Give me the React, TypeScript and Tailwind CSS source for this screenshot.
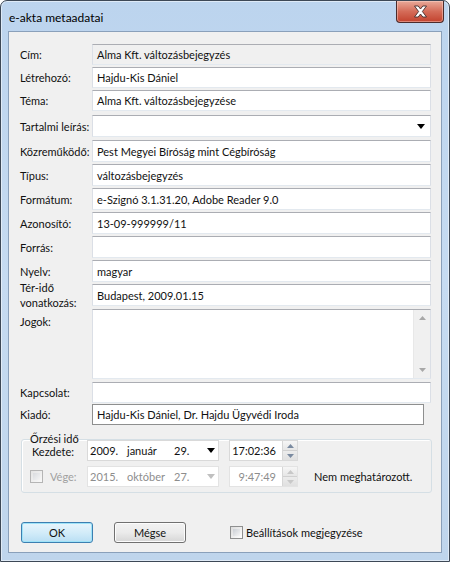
import React from 'react';

const font = { fontFamily: 'Lato, "Noto Sans", "Liberation Sans", sans-serif' };

function TextBox({ value = '', readOnly = false, className = '' }: { value?: string; readOnly?: boolean; className?: string }) {
  return (
    <div
      className={`flex items-center flex-1 h-full border border-[#dbdfe6] border-t-[#abadb3] border-b-[#e3e9ef] px-[4px] text-[11px] leading-none text-[#111] whitespace-nowrap overflow-hidden ${
        readOnly ? 'bg-[#f0f0f0]' : 'bg-white'
      } ${className}`}
    >
      {value}
    </div>
  );
}

function Row({ label, value, className, readOnly }: { label: string; value?: string; className: string; readOnly?: boolean }) {
  return (
    <div className={`flex items-center ${className}`}>
      <div className="w-[72px] shrink-0 text-[11px] leading-none text-[#111] whitespace-nowrap">{label}</div>
      <TextBox value={value} readOnly={readOnly} />
    </div>
  );
}

function SpinArrows({ disabled = false }: { disabled?: boolean }) {
  const c = disabled ? '#c8c8c8' : '#7a8aa0';
  return (
    <div className="flex flex-col w-[15px] h-full border-l border-[#d6d6d6]">
      <div className="flex-1 flex items-center justify-center bg-gradient-to-b from-[#f6f6f6] to-[#e6e6e6] border-b border-[#d0d0d0]">
        <svg width="7" height="4" viewBox="0 0 7 4">
          <path d="M0 4 L3.5 0 L7 4 Z" fill={c} />
        </svg>
      </div>
      <div className="flex-1 flex items-center justify-center bg-gradient-to-b from-[#ececec] to-[#e0e0e0]">
        <svg width="7" height="4" viewBox="0 0 7 4">
          <path d="M0 0 L3.5 4 L7 0 Z" fill={c} />
        </svg>
      </div>
    </div>
  );
}

function DatePicker({ y, m, d, disabled = false }: { y: string; m: string; d: string; disabled?: boolean }) {
  return (
    <div
      className={`flex items-center w-[132px] h-[21px] border bg-white text-[11px] leading-none whitespace-nowrap ${
        disabled ? 'border-[#e3e3e3] text-[#8d8d8d]' : 'border-[#d9d9d9] text-[#111]'
      }`}
    >
      <span className="w-[39px] pl-[2px]">{y}</span>
      <span className="w-[47px]">{m}</span>
      <span className="w-[33px]">{d}</span>
      <svg width="8" height="5" viewBox="0 0 8 5">
        <path d="M0 0 L8 0 L4 5 Z" fill={disabled ? '#c0c0c0' : '#000'} />
      </svg>
    </div>
  );
}

function TimeBox({ value, disabled = false }: { value: string; disabled?: boolean }) {
  return (
    <div
      className={`flex items-stretch w-[69px] h-[21px] border bg-white text-[11px] leading-none ${
        disabled ? 'border-[#e3e3e3] text-[#8d8d8d]' : 'border-[#d9d9d9] text-[#111]'
      }`}
    >
      <div className="flex-1 flex items-center justify-end pr-[6px]">{value}</div>
      <SpinArrows disabled={disabled} />
    </div>
  );
}

function CheckBox() {
  return (
    <div className="w-[13px] h-[13px] border border-[#8e8f8f] bg-gradient-to-br from-[#dcdcdc] to-[#ffffff] p-[2px]">
      <div className="w-full h-full bg-gradient-to-br from-[#cbcfd5] to-[#f6f6f6]" />
    </div>
  );
}

export default function App() {
  return (
    <div style={font} className="w-[450px] h-[562px] overflow-hidden bg-white">
      <div className="w-[450px] h-[562px] flex flex-col border border-[#3d4856] rounded-t-[7px] bg-gradient-to-b from-[#bcd4ee] via-[#c6dbf1] to-[#bfd5ec] shadow-[inset_0_0_0_1px_rgba(255,255,255,0.5)]">
        {/* title bar */}
        <div className="h-[30px] flex items-start shrink-0">
          <div className="pl-[8px] pt-[11px] text-[12px] leading-none text-black">e-akta metaadatai</div>
          <div className="ml-auto mr-[5px] w-[48px] h-[22px] rounded-b-[4px] border border-t-0 border-[#4b2b2b] bg-gradient-to-b from-[#e8a999] via-[#d46b58] to-[#c2412d] shadow-[inset_0_0_0_1px_rgba(255,220,210,0.45)] flex items-center justify-center">
            <svg width="15" height="13" viewBox="0 0 15 13">
              <path
                d="M1.5 1 L5.2 1 L7.5 4 L9.8 1 L13.5 1 L9.4 6.5 L13.5 12 L9.8 12 L7.5 9 L5.2 12 L1.5 12 L5.6 6.5 Z"
                fill="#fff"
                stroke="#3f2a2a"
                strokeWidth="0.9"
                strokeLinejoin="round"
              />
            </svg>
          </div>
        </div>

        {/* client area */}
        <div className="flex-1 mx-[7px] mb-[8px] border border-[#8aa0ba] bg-[#f0f0f0] flex flex-col pl-[11px] pr-[10px]">
          <Row label="Cím:" value="Alma Kft. változásbejegyzés" readOnly className="mt-[12px] h-[21px]" />
          <Row label="Létrehozó:" value="Hajdu-Kis Dániel" className="mt-[2px] h-[21px]" />
          <Row label="Téma:" value="Alma Kft. változásbejegyzése" className="mt-[2px] h-[21px]" />

          <div className="flex items-center mt-[4px] h-[22px]">
            <div className="w-[72px] shrink-0 text-[11px] leading-none text-[#111] whitespace-nowrap">Tartalmi leírás:</div>
            <div className="flex-1 h-full flex items-center justify-end border border-[#dbdfe6] border-t-[#abadb3] border-b-[#e3e9ef] bg-white pr-[5px]">
              <svg width="8" height="5" viewBox="0 0 8 5">
                <path d="M0 0 L8 0 L4 5 Z" fill="#000" />
              </svg>
            </div>
          </div>

          <Row label="Közreműködő:" value="Pest Megyei Bíróság mint Cégbíróság" className="mt-[3px] h-[22px]" />
          <Row label="Típus:" value="változásbejegyzés" className="mt-[2px] h-[22px]" />
          <Row label="Formátum:" value="e-Szignó 3.1.31.20, Adobe Reader 9.0" className="mt-[2px] h-[22px]" />
          <Row label="Azonosító:" value="13-09-999999/11" className="mt-[2px] h-[22px]" />
          <Row label="Forrás:" value="" className="mt-[2px] h-[22px]" />
          <Row label="Nyelv:" value="magyar" className="mt-[2px] h-[22px]" />

          <div className="flex items-center mt-[2px] h-[22px]">
            <div className="w-[72px] shrink-0 text-[11px] leading-[15px] text-[#111] whitespace-nowrap">
              Tér-idő
              <br />
              vonatkozás:
            </div>
            <TextBox value="Budapest, 2009.01.15" />
          </div>

          <div className="flex items-start mt-[3px] h-[70px]">
            <div className="w-[72px] shrink-0 text-[11px] leading-none text-[#111] pt-[7px]">Jogok:</div>
            <div className="flex-1 h-full flex border border-[#dbdfe6] border-t-[#abadb3] border-b-[#e3e9ef] bg-white">
              <div className="flex-1" />
              <div className="w-[17px] h-full bg-[#f0f0f0] border-l border-[#e8e8e8] flex flex-col justify-between items-center py-[6px]">
                <svg width="7" height="4" viewBox="0 0 7 4">
                  <path d="M0 4 L3.5 0 L7 4 Z" fill="#a8a8a8" />
                </svg>
                <svg width="7" height="4" viewBox="0 0 7 4">
                  <path d="M0 0 L3.5 4 L7 0 Z" fill="#a8a8a8" />
                </svg>
              </div>
            </div>
          </div>

          <Row label="Kapcsolat:" value="" className="mt-[3px] h-[21px]" />

          <div className="flex items-center mt-[1px] h-[21px]">
            <div className="w-[72px] shrink-0 text-[11px] leading-none text-[#111]">Kiadó:</div>
            <div className="flex-1 h-full mr-[7px] flex items-center border border-[#8e8f8f] bg-white px-[4px] text-[11px] leading-none text-[#111] whitespace-nowrap">
              Hajdu-Kis Dániel, Dr. Hajdu Ügyvédi Iroda
            </div>
          </div>

          {/* group box */}
          <div className="relative mt-[14px] ml-[1px] mr-[-1px] border border-[#d5dfe5] rounded-[3px] shadow-[inset_1px_1px_0_#fff] flex flex-col pb-[5px]">
            <div className="absolute left-[8px] -top-[7px] bg-[#f0f0f0] text-[11px] leading-none text-[#111] whitespace-nowrap">Őrzési idő</div>
            <div className="flex items-center">
              <div className="w-[65px] pl-[10px] text-[11px] leading-none text-[#111] mt-[2px]">Kezdete:</div>
              <DatePicker y="2009." m="január" d="29." />
              <div className="ml-[10px]">
                <TimeBox value="17:02:36" />
              </div>
            </div>
            <div className="flex items-center mt-[5px]">
              <div className="w-[65px] flex items-center pl-[8px]">
                <div className="opacity-60">
                  <CheckBox />
                </div>
                <span className="ml-[7px] text-[11px] leading-none text-[#a0a0a0]">Vége:</span>
              </div>
              <DatePicker y="2015." m="október" d="27." disabled />
              <div className="ml-[10px]">
                <TimeBox value="9:47:49" disabled />
              </div>
              <span className="ml-[16px] text-[11px] leading-none text-[#111] whitespace-nowrap">Nem meghatározott.</span>
            </div>
          </div>

          {/* buttons */}
          <div className="flex items-center mt-[29px] ml-[1px]">
            <div className="w-[72px] h-[21px] rounded-[3px] border border-[#3c7fb1] bg-gradient-to-b from-[#e8f5fc] via-[#d3ecf9] to-[#b9dff4] shadow-[inset_0_0_0_1px_#9fe3f8] flex items-center justify-center text-[11px] leading-none text-[#111]">
              OK
            </div>
            <div className="ml-[21px] w-[72px] h-[21px] rounded-[3px] border border-[#707070] bg-gradient-to-b from-[#f2f2f2] via-[#ebebeb] to-[#d6d6d6] shadow-[inset_0_0_0_1px_#fcfcfc] flex items-center justify-center text-[11px] leading-none text-[#111]">
              Mégse
            </div>
            <div className="ml-[44px]">
              <CheckBox />
            </div>
            <span className="ml-[3px] text-[11px] leading-none text-[#111] whitespace-nowrap">Beállítások megjegyzése</span>
          </div>
        </div>
      </div>
    </div>
  );
}
